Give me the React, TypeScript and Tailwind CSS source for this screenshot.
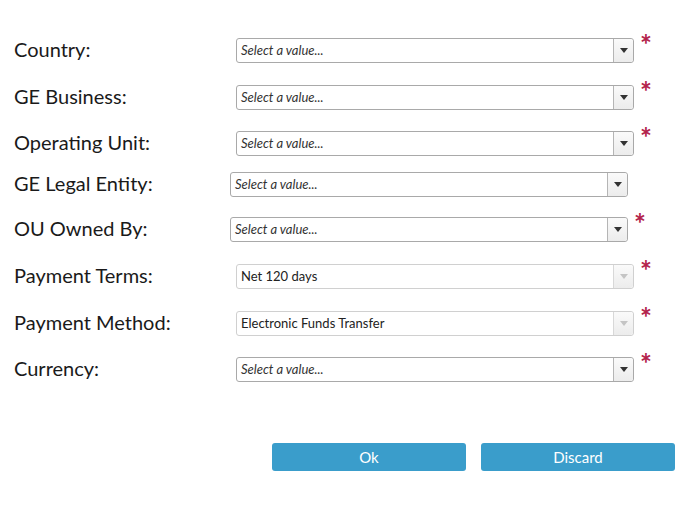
const rows = [
    { label: 'Country:', mt: 'mt-[38px]', lw: 'w-[222px]', value: '', disabled: false, req: true },
    { label: 'GE Business:', mt: 'mt-[22px]', lw: 'w-[222px]', value: '', disabled: false, req: true },
    { label: 'Operating Unit:', mt: 'mt-[21px]', lw: 'w-[222px]', value: '', disabled: false, req: true },
    { label: 'GE Legal Entity:', mt: 'mt-[16px]', lw: 'w-[216px]', value: '', disabled: false, req: false },
    { label: 'OU Owned By:', mt: 'mt-[20px]', lw: 'w-[216px]', value: '', disabled: false, req: true },
    { label: 'Payment Terms:', mt: 'mt-[22px]', lw: 'w-[222px]', value: 'Net 120 days', disabled: true, req: true },
    { label: 'Payment Method:', mt: 'mt-[22px]', lw: 'w-[222px]', value: 'Electronic Funds Transfer', disabled: true, req: true },
    { label: 'Currency:', mt: 'mt-[21px]', lw: 'w-[222px]', value: '', disabled: false, req: true },
];

const SelectBox = ({ value, disabled }: { value: string; disabled: boolean }) => (
    <div
        className={`flex h-[25px] w-[398px] rounded-[3px] border bg-white ${
            disabled ? 'border-[#d0d0d0]' : 'border-[#a9a9a9]'
        }`}
    >
        <div
            className={`flex flex-1 items-center pl-[4px] text-[13px] ${
                value ? 'text-[#222]' : 'italic text-[#333]'
            }`}
        >
            {value || 'Select a value...'}
        </div>
        <div
            className={`flex w-[20px] items-center justify-center rounded-r-[3px] border-l bg-gradient-to-b from-[#fafafa] to-[#ececec] ${
                disabled ? 'border-[#d8d8d8]' : 'border-[#b5b5b5]'
            }`}
        >
            <svg width="8" height="5" viewBox="0 0 8 5">
                <path d="M0 0H8L4 5Z" fill={disabled ? '#c4c4c4' : '#333'} />
            </svg>
        </div>
    </div>
);

const App = () => {
    return (
        <div className="h-[509px] w-[699px] bg-white font-['Lato',sans-serif]">
            <div className="flex flex-col">
                {rows.map((row) => (
                    <div key={row.label} className={`flex items-center pl-[14px] ${row.mt}`}>
                        <div className={`${row.lw} -mt-[4px] text-[20px] leading-none text-[#1a1a1a]`}>{row.label}</div>
                        <SelectBox value={row.value} disabled={row.disabled} />
                        {row.req && (
                            <span className="ml-[6px] -mt-[8px] self-start text-[28px] font-bold leading-[28px] text-[#b3234a]">
                                *
                            </span>
                        )}
                    </div>
                ))}
            </div>
            <div className="mt-[61px] flex gap-[15px] pl-[272px]">
                <button className="h-[28px] w-[194px] rounded-[3px] bg-[#3a9dcb] text-[15px] text-white">Ok</button>
                <button className="h-[28px] w-[194px] rounded-[3px] bg-[#3a9dcb] text-[15px] text-white">Discard</button>
            </div>
        </div>
    );
};

export default App;
